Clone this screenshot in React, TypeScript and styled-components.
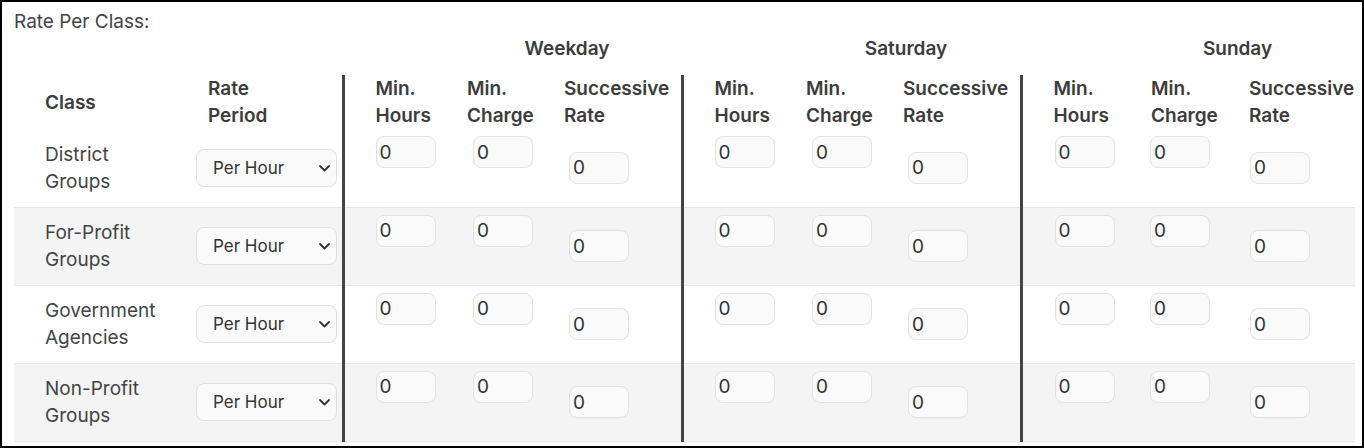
import React from 'react';
import styled, { createGlobalStyle } from 'styled-components';

const GlobalStyle = createGlobalStyle`
  body {
    margin: 0;
    background: #fff;
    font-family: Inter, "Liberation Sans", sans-serif;
    color: #444;
  }
`;

// outer card with the black frame
const Frame = styled.div`
  width: 1364px;
  height: 448px;
  box-sizing: border-box;
  border: 2px solid #000;
  padding: 6px 7px 0 12px;
  overflow: hidden;
`;

const Title = styled.div`
  font-size: 19px;
  line-height: 27px;
`;

const Table = styled.table`
  border-collapse: collapse;
  table-layout: fixed;
  width: 1341px;
  font-size: 19px;
  line-height: 27px;
`;

const DayHead = styled.th<{ $shift?: number }>`
  height: 40px;
  padding: 0 ${(p) => p.$shift || 0}px 0 0;
  vertical-align: top;
  text-align: center;
  font-weight: 600;
  color: #3c3c3c;
`;

const ColHead = styled.th<{ $pad: number; $divider?: boolean }>`
  height: 54px;
  padding: 0 0 0 ${(p) => p.$pad}px;
  text-align: left;
  vertical-align: middle;
  font-weight: 600;
  color: #3c3c3c;
  white-space: nowrap;
  border-left: ${(p) => (p.$divider ? '3px solid #444' : 'none')};
`;

const Row = styled.tr<{ $shaded?: boolean }>`
  height: 78px;
  background: ${(p) => (p.$shaded ? '#f4f4f4' : 'transparent')};
`;

const Cell = styled.td<{ $pad: number; $top?: boolean; $divider?: boolean }>`
  padding: ${(p) => (p.$top ? 7 : 0)}px 0 0 ${(p) => p.$pad}px;
  vertical-align: ${(p) => (p.$top ? 'top' : 'middle')};
  border-bottom: 1px solid #e6e6e6;
  border-left: ${(p) => (p.$divider ? '3px solid #444' : 'none')};
`;

const SelectWrap = styled.div`
  position: relative;
  width: 141px;
  height: 38px;
`;

const Select = styled.select`
  appearance: none;
  width: 141px;
  height: 38px;
  box-sizing: border-box;
  padding: 0 0 0 16px;
  border: 1px solid #e0e0e0;
  border-radius: 8px;
  background: #fafafa;
  font-family: Inter, "Liberation Sans", sans-serif;
  font-size: 17px;
  color: #333;
`;

const Chevron = styled.svg`
  position: absolute;
  right: 6px;
  top: 13px;
  pointer-events: none;
`;

const NumInput = styled.input<{ $offset: number }>`
  display: block;
  width: 60px;
  height: 32px;
  box-sizing: border-box;
  margin-left: ${(p) => p.$offset}px;
  padding: 0 3px;
  border: 1px solid #e2e2e2;
  border-radius: 8px;
  background: #fafafa;
  font-family: Inter, "Liberation Sans", sans-serif;
  font-size: 19px;
  color: #333;
`;

const widths = [174, 155, 109, 97, 133, 109, 97, 133, 115, 98, 121];

const groups = [
  { day: 'Weekday', shift: 0, cols: [{ pad: 31, off: 0 }, { pad: 15, off: 6 }, { pad: 15, off: 5 }] },
  { day: 'Saturday', shift: 0, cols: [{ pad: 31, off: 0 }, { pad: 15, off: 6 }, { pad: 15, off: 5 }] },
  { day: 'Sunday', shift: 16, cols: [{ pad: 31, off: 1 }, { pad: 15, off: -1 }, { pad: 15, off: 1 }] },
];

const fields = [
  ['Min.', 'Hours'],
  ['Min.', 'Charge'],
  ['Successive', 'Rate'],
];

const classes = [
  ['District', 'Groups'],
  ['For-Profit', 'Groups'],
  ['Government', 'Agencies'],
  ['Non-Profit', 'Groups'],
];

const RateSelect = () => (
  <SelectWrap>
    <Select defaultValue="hour">
      <option value="hour">Per Hour</option>
      <option value="day">Per Day</option>
    </Select>
    <Chevron width="13" height="12" viewBox="0 0 13 12">
      <path d="M2 4l4.5 4.5L11 4" fill="none" stroke="#333" strokeWidth="1.8" strokeLinecap="round" strokeLinejoin="round" />
    </Chevron>
  </SelectWrap>
);

const App: React.FC = () => (
  <>
    <GlobalStyle />
    <Frame>
      <Title>Rate Per Class:</Title>
      <Table>
        <colgroup>
          {widths.map((w, i) => (
            <col key={i} style={{ width: w }} />
          ))}
        </colgroup>
        <thead>
          <tr>
            <th colSpan={2} />
            {groups.map((g) => (
              <React.Fragment key={g.day}>
                <th />
                <DayHead colSpan={2} $shift={g.shift}>
                  {g.day}
                </DayHead>
              </React.Fragment>
            ))}
          </tr>
          <tr>
            <ColHead $pad={31}>Class</ColHead>
            <ColHead $pad={20}>
              Rate
              <br />
              Period
            </ColHead>
            {groups.map((g) =>
              g.cols.map((c, i) => (
                <ColHead key={g.day + i} $pad={c.pad} $divider={i === 0}>
                  {fields[i][0]}
                  <br />
                  {fields[i][1]}
                </ColHead>
              ))
            )}
          </tr>
        </thead>
        <tbody>
          {classes.map((cls, r) => (
            <Row key={cls[0]} $shaded={r % 2 === 1}>
              <Cell $pad={31}>
                {cls[0]}
                <br />
                {cls[1]}
              </Cell>
              <Cell $pad={8}>
                <RateSelect />
              </Cell>
              {groups.map((g) =>
                g.cols.map((c, i) => (
                  <Cell key={g.day + i} $pad={c.pad} $top={i < 2} $divider={i === 0}>
                    <NumInput $offset={c.off} defaultValue="0" />
                  </Cell>
                ))
              )}
            </Row>
          ))}
        </tbody>
      </Table>
    </Frame>
  </>
);

export default App;
